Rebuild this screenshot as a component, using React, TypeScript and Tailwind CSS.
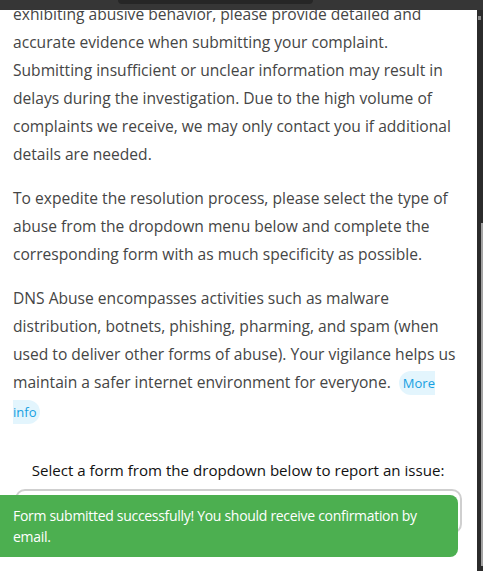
import React from "react";

const App = () => {
  const paragraphClass = "text-[15.6px] leading-[28px] text-[#454545]";

  return (
    <div className="relative flex h-[571px] w-[483px] flex-col overflow-hidden bg-white font-['Open_Sans',sans-serif]">
      <div className="flex h-[10px] shrink-0 justify-center bg-[#363636]">
        <div className="ml-[-52px] h-[4px] w-[195px] rounded-b-full bg-[#262626]"></div>
      </div>

      <div className="flex min-h-0 flex-1">
        <div className="min-w-0 flex-1 overflow-hidden">
          <div className="-mt-[10px] pl-[13px] pr-[14px]">
            <p className={paragraphClass}>
              exhibiting abusive behavior, please provide detailed and accurate
              evidence when submitting your complaint. Submitting insufficient or
              unclear information may result in delays during the investigation.
              Due to the high volume of complaints we receive, we may only contact
              you if additional details are needed.
            </p>
            <p className={`${paragraphClass} mt-4`}>
              To expedite the resolution process, please select the type of abuse
              from the dropdown menu below and complete the corresponding form with
              as much specificity as possible.
            </p>
            <p className={`${paragraphClass} mt-4`}>
              DNS Abuse encompasses activities such as malware distribution,
              botnets, phishing, pharming, and spam (when used to deliver other
              forms of abuse). Your vigilance helps us maintain a safer internet
              environment for everyone.{" "}
              <a className="ml-1 rounded-full bg-[#e3f5fd] px-[4px] py-[3px] text-[13px] text-[#169fe2]">
                More info
              </a>
            </p>

            <p className="mt-[32px] text-center text-[15.1px] leading-[24px] text-[#111]">
              Select a form from the dropdown below to report an issue:
            </p>
            <div className="ml-[2px] mr-[1px] mt-[7px] h-[45px] rounded-[10px] border-2 border-[#cfcfcf] bg-white"></div>
          </div>
        </div>

        <div className="flex w-[6px] shrink-0 flex-col bg-[#2b2b2b]">
          <div className="ml-[1px] mt-[6px] h-[4px] w-[3px] bg-[#8a8a8a]"></div>
          <div className="mt-[203px] ml-[4px] h-[343px] w-[2px] bg-[#a3a3a3]"></div>
        </div>
      </div>

      <div className="absolute left-0 top-[495px] w-[458px] rounded-r-lg bg-[#4caf50] px-[13px] py-[10px] text-[14px] leading-[21px] tracking-[-0.3px] text-white">
        Form submitted successfully! You should receive confirmation by email.
      </div>
    </div>
  );
};

export default App;
